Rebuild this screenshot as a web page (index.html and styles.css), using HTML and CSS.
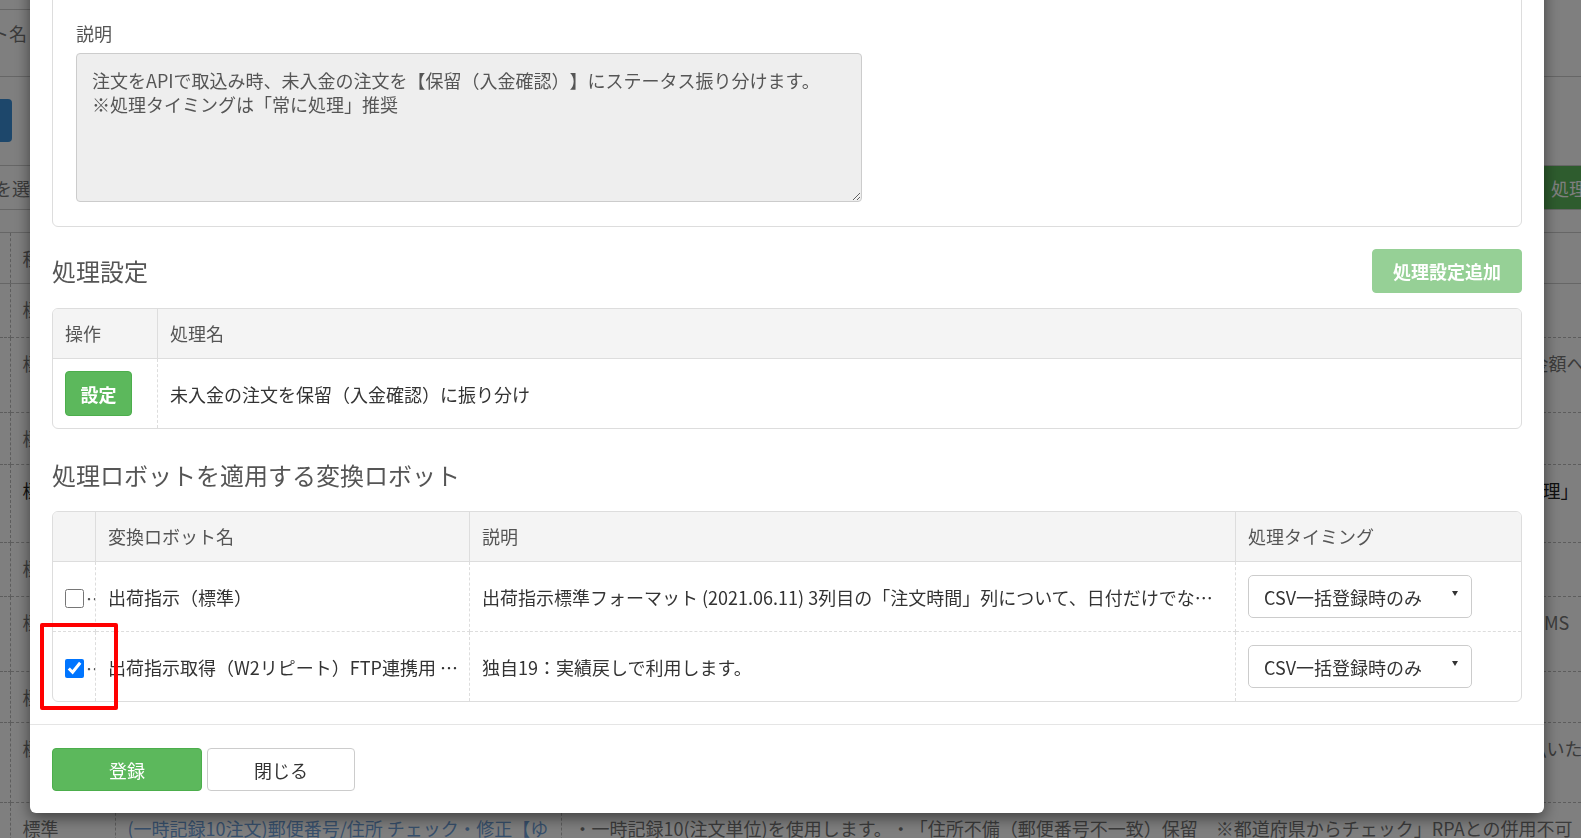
FILE: index.html
```html
<!DOCTYPE html>
<html lang="ja">
<head>
<meta charset="utf-8">
<title>処理ロボット設定</title>
<link rel="stylesheet" href="styles.css">
</head>
<body>
<div class="page">
  <div class="pg-top"></div>
  <div class="pg-row pg-name"><span class="pg-label">ロボット名</span></div>
  <div class="pg-row pg-actions"><button class="pg-btn-blue">検索</button></div>
  <div class="pg-row pg-select"><span class="pg-label pg-label-wide">処理を選択</span><button class="pg-btn-green">処理ロボット追加</button></div>
  <table class="pg-table">
    <colgroup><col class="c0"><col class="c1"><col class="c2"><col class="c3"><col class="c4"></colgroup>
    <tr class="h51"><th></th><th>種別</th><th>処理名</th><th>説明</th><th></th></tr>
    <tr class="h54"><td></td><td>標準</td><td></td><td></td><td></td></tr>
    <tr class="h75"><td></td><td>標準</td><td></td><td></td><td class="pad-kin">金額へ</td></tr>
    <tr class="h52"><td></td><td>標準</td><td></td><td></td><td></td></tr>
    <tr class="h78 pg-dark"><td></td><td>標準</td><td></td><td></td><td>処理」</td></tr>
    <tr class="h54"><td></td><td>標準</td><td></td><td></td><td></td></tr>
    <tr class="h75"><td></td><td>標準</td><td></td><td></td><td class="pad-cms">CMS</td></tr>
    <tr class="h51"><td></td><td>標準</td><td></td><td></td><td></td></tr>
    <tr class="h80"><td></td><td>標準</td><td></td><td></td><td class="pad-hara">払いた</td></tr>
    <tr class="h47"><td></td><td>標準</td><td class="pg-link">(一時記録10注文)郵便番号/住所 チェック・修正【ゆうパック】</td><td colspan="2">・一時記録10(注文単位)を使用します。・「住所不備（郵便番号不一致）保留　※都道府県からチェック」RPAとの併用不可</td></tr>
  </table>
</div>

<div class="overlay"></div>

<div class="modal">
  <div class="modal-body">
    <div class="card">
      <label class="field-label">説明</label>
      <textarea class="field-text" readonly>注文をAPIで取込み時、未入金の注文を【保留（入金確認）】にステータス振り分けます。
※処理タイミングは「常に処理」推奨</textarea>
    </div>

    <div class="section-head">
      <h2 class="section-title">処理設定</h2>
      <button class="btn btn-add">処理設定追加</button>
    </div>
    <div class="tbl-wrap">
      <table class="tbl">
        <colgroup><col class="w-op"><col></colgroup>
        <tr><th>操作</th><th>処理名</th></tr>
        <tr><td class="op-cell"><button class="btn btn-set">設定</button></td><td>未入金の注文を保留（入金確認）に振り分け</td></tr>
      </table>
    </div>

    <h2 class="section-title section-title-2">処理ロボットを適用する変換ロボット</h2>
    <div class="tbl-wrap tbl-wrap-2">
      <table class="tbl tbl-robots">
        <colgroup><col class="w-chk"><col class="w-name"><col class="w-desc"><col></colgroup>
        <tr><th></th><th>変換ロボット名</th><th>説明</th><th>処理タイミング</th></tr>
        <tr>
          <td class="chk"><input type="checkbox" class="cb"><span class="ell">…</span></td>
          <td>出荷指示（標準）</td>
          <td>出荷指示標準フォーマット (2021.06.11) 3列目の「注文時間」列について、日付だけでな…</td>
          <td class="sel-cell"><div class="select"><span>CSV一括登録時のみ</span><i class="caret"></i></div></td>
        </tr>
        <tr>
          <td class="chk"><input type="checkbox" class="cb" checked><span class="ell">…</span></td>
          <td>出荷指示取得（W2リピート）FTP連携用 …</td>
          <td>独自19：実績戻しで利用します。</td>
          <td class="sel-cell"><div class="select"><span>CSV一括登録時のみ</span><i class="caret"></i></div></td>
        </tr>
      </table>
    </div>
  </div>
  <div class="modal-footer">
    <button class="btn btn-primary">登録</button>
    <button class="btn btn-default">閉じる</button>
  </div>
</div>

<div class="annot"></div>
</body>
</html>
```
FILE: styles.css
```css
* { box-sizing: border-box; }
html, body { margin: 0; padding: 0; }
body {
  font-family: "Noto Sans CJK JP", "Noto Sans", sans-serif;
  font-size: 18px;
  line-height: 24px;
  color: #777;
  background: #fff;
  width: 1581px;
  height: 838px;
  overflow: hidden;
  text-spacing-trim: space-all;
}

/* ---------- underlying page ---------- */
.page { width: 1581px; }
.pg-top { width: 400px; height: 10px; border-bottom: 1px solid #ccc; }
.pg-row { display: flex; align-items: flex-start; border-bottom: 1px solid #ccc; }
.pg-name { height: 67px; padding-top: 11px; }
.pg-label { width: 27px; display: flex; justify-content: flex-end; white-space: nowrap; }
.pg-label-wide { width: 48px; }
.pg-actions { height: 89px; }
.pg-btn-blue {
  margin: 22px 0 0 -60px; width: 72px; height: 43px;
  background: #3b8fd6; border: 0; border-radius: 4px; color: #fff; font: inherit;
}
.pg-select { height: 44px; align-items: center; justify-content: space-between; }
.pg-btn-green {
  align-self: stretch; width: 140px; margin-right: -100px; padding: 0 0 0 10px;
  text-align: left; white-space: nowrap; overflow: hidden;
  background: #5cb85c; border: 0; border-radius: 4px 0 0 4px; color: #fff; font: inherit;
}
.pg-table {
  margin-top: 22px; width: 1700px; border-collapse: collapse; table-layout: fixed;
  border-top: 1px solid #ccc;
}
.pg-table th, .pg-table td {
  padding: 13px 8px 0 12px; vertical-align: top; text-align: left; font-weight: 400;
  overflow: hidden;
  border-bottom: 1px dashed #bbb; border-right: 1px dashed #bbb;
}
.pg-table th:first-child, .pg-table td:first-child { padding: 0; }
.pg-table th { border-bottom: 1px solid #ccc; }
.pg-table .c0 { width: 10px; }
.pg-table .c1 { width: 105px; }
.pg-table .c2 { width: 446px; }
.pg-table .c3 { width: 951px; }
.pg-table .c4 { width: 188px; }
.pg-table td.pad-kin { padding-left: 18px; white-space: nowrap; }
.pg-table td.pad-cms { padding-left: 20px; white-space: nowrap; }
.pg-table td.pad-hara { padding-left: 16px; white-space: nowrap; }
.pg-dark td { color: #222; }
.pg-link { color: #6fa0d8; }
.h47 { height: 47px; } .h51 { height: 51px; } .h52 { height: 52px; }
.h54 { height: 54px; } .h75 { height: 75px; } .h78 { height: 78px; }
.h80 { height: 80px; }

.overlay { position: fixed; inset: 0; background: rgba(0, 0, 0, 0.5); }

/* ---------- modal ---------- */
.modal {
  position: fixed; left: 30px; top: -40px; width: 1514px;
  background: #fff; border-radius: 6px;
  box-shadow: 0 5px 15px rgba(0, 0, 0, 0.5);
  color: #333;
}
.modal-body { padding: 22px 22px 22px; }
.card { border: 1px solid #ddd; border-radius: 6px; padding: 38px 23px 24px; }
.field-label { display: block; color: #555; margin-bottom: 8px; }
.field-text {
  display: block; width: 786px; height: 149px;
  background: #eee; border: 1px solid #ccc; border-radius: 4px;
  padding: 14px 15px; font: inherit; line-height: 24px; color: #555;
  resize: both; outline: none; text-spacing-trim: space-all;
}
.section-head {
  display: flex; justify-content: space-between; align-items: center;
  margin-top: 22px; height: 44px;
}
.section-title { margin: 0; font-size: 24px; font-weight: 400; line-height: 30px; color: #555; }
.section-title-2 { margin-top: 31px; }

.btn { font: inherit; border: 1px solid transparent; border-radius: 4px; padding: 0; cursor: pointer; }
.btn-add { width: 150px; height: 44px; background: #96d096; border-color: #96d096; color: #fff; font-weight: 700; }
.btn-set { width: 67px; height: 45px; background: #5cb85c; border-color: #4cae4c; color: #fff; font-weight: 700; display: block; }

.tbl-wrap { border: 1px solid #ddd; border-radius: 6px; overflow: hidden; margin-top: 15px; }
.tbl-wrap-2 { margin-top: 21px; }
.tbl { width: 100%; border-collapse: separate; border-spacing: 0; table-layout: fixed; }
.tbl th {
  background: #f4f4f4; font-weight: 400; text-align: left; color: #555;
  padding: 12px 12px 13px; line-height: 24px;
  border-bottom: 1px solid #ddd; border-right: 1px solid #ddd;
}
.tbl td {
  padding: 12px; line-height: 24px; color: #333; text-align: left;
  border-right: 1px dashed #ddd; border-bottom: 1px dashed #ddd;
  white-space: nowrap; overflow: hidden; vertical-align: middle;
}
.tbl th:last-child, .tbl td:last-child { border-right: 0; }
.tbl tr:last-child td { border-bottom: 0; }
.w-op { width: 105px; }
.w-chk { width: 43px; }
.w-name { width: 374px; }
.w-desc { width: 766px; }

.tbl td.chk { padding: 12px 0 12px 12px; }
.cb { width: 19px; height: 19px; margin: 0; vertical-align: middle; }
.ell { color: #555; vertical-align: middle; margin-left: 2px; }
.tbl td.sel-cell { padding: 13px 12px; }
.select {
  display: flex; align-items: center; width: 224px; height: 43px;
  border: 1px solid #ccc; border-radius: 5px; padding: 0 13px 0 15px;
  background: #fff; color: #333;
}
.select span { flex: 1; }
.caret {
  width: 0; height: 0; margin-top: -7px;
  border-left: 3px solid transparent; border-right: 3px solid transparent;
  border-top: 5px solid #333;
}

.modal-footer {
  border-top: 1px solid #e5e5e5; padding: 23px 22px 22px;
  display: flex; gap: 5px;
}
.btn-primary { width: 150px; height: 43px; background: #5cb85c; border-color: #4cae4c; color: #fff; }
.btn-default { width: 148px; height: 43px; background: #fff; border-color: #ccc; color: #333; }

/* annotation highlight */
.annot {
  position: fixed; left: 40px; top: 623px; width: 78px; height: 87px;
  border: 4px solid #f00; border-radius: 2px;
}
```
